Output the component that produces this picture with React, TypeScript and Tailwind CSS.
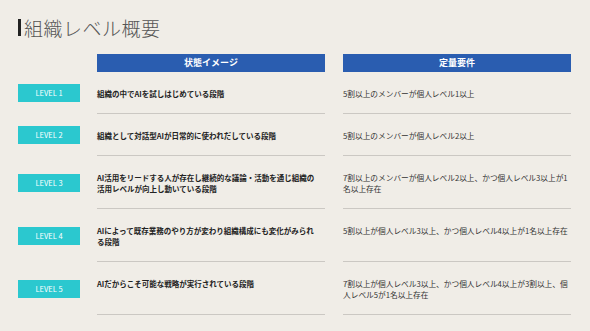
const rows = [
  {
    level: "LEVEL 1",
    state: "組織の中でAIを試しはじめている段階",
    req: "5割以上のメンバーが個人レベル1以上",
  },
  {
    level: "LEVEL 2",
    state: "組織として対話型AIが日常的に使われだしている段階",
    req: "5割以上のメンバーが個人レベル2以上",
  },
  {
    level: "LEVEL 3",
    state: "AI活用をリードする人が存在し継続的な議論・活動を通じ組織の活用レベルが向上し動いている段階",
    req: "7割以上のメンバーが個人レベル2以上、かつ個人レベル3以上が1名以上存在",
  },
  {
    level: "LEVEL 4",
    state: "AIによって既存業務のやり方が変わり組織構成にも変化がみられる段階",
    req: "5割以上が個人レベル3以上、かつ個人レベル4以上が1名以上存在",
  },
  {
    level: "LEVEL 5",
    state: "AIだからこそ可能な戦略が実行されている段階",
    req: "7割以上が個人レベル3以上、かつ個人レベル4以上が3割以上、個人レベル5が1名以上存在",
  },
];

const App = () => {
  return (
    <div
      className="w-[590px] h-[331px] bg-[#f0ede7] overflow-hidden"
      style={{ fontFamily: '"Noto Sans CJK JP", "Noto Sans", sans-serif' }}
    >
      {/* タイトル */}
      <div className="flex items-center pl-[18px] pt-[18px]">
        <div className="w-[3px] h-[17px] bg-[#222]" />
        <h1 className="ml-[3px] text-[19px] leading-[19px] font-light text-[#555] tracking-[0.5px]">
          組織レベル概要
        </h1>
      </div>

      {/* 表 */}
      <div className="ml-[18px] mt-[17px]">
        {/* ヘッダー */}
        <div className="flex">
          <div className="w-[62px]" />
          <div className="ml-[17px] w-[228px] h-[18px] bg-[#2a5db0] text-white text-[9px] font-bold flex items-center justify-center">
            状態イメージ
          </div>
          <div className="ml-[18px] w-[228px] h-[18px] bg-[#2a5db0] text-white text-[9px] font-bold flex items-center justify-center">
            定量要件
          </div>
        </div>

        {rows.map((r) => (
          <div key={r.level} className="flex">
            <div className="w-[62px] flex items-center">
              <div className="w-[62px] h-[18px] bg-[#2bc8cf] text-white text-[7.5px] flex items-center justify-center">
                {r.level}
              </div>
            </div>
            <div className="ml-[17px] w-[228px] pr-[6px] pt-4 pb-[14px] border-b border-[#cbc8c3] text-[7.5px] leading-[11px] font-bold text-[#222]">
              {r.state}
            </div>
            <div className="ml-[18px] w-[228px] pt-4 pb-[14px] border-b border-[#cbc8c3] text-[7.7px] leading-[11px] text-[#333]">
              {r.req}
            </div>
          </div>
        ))}
      </div>
    </div>
  );
};

export default App;
